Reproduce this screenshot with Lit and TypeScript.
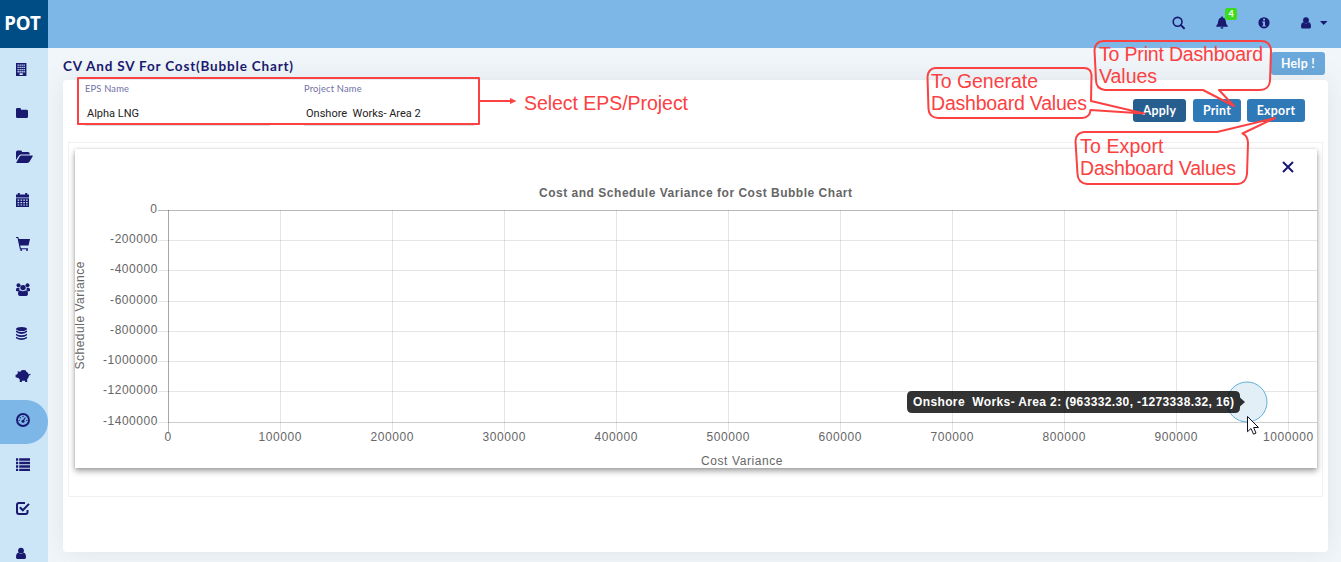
import { LitElement, html, svg, css } from 'lit';
import { customElement } from 'lit/decorators.js';
import { classMap } from 'lit/directives/class-map.js';

// Glyphs are drawn in a 20 x 20 box and take the current text colour.
const icons = {
  building: svg`<path fill-rule="evenodd" d="M2 3h10.400v13H2zM3.500 4.500v1.300h1.300V4.500zm2 0v1.300h1.300V4.500zm2 0v1.300h1.300V4.500zm2 0v1.300h1.300V4.500zM3.500 6.700V8h1.300V6.700zm2 0V8h1.300V6.700zm2 0V8h1.300V6.700zm2 0V8h1.300V6.700zM3.500 8.900v1.300h1.300V8.900zm2 0v1.300h1.300V8.900zm2 0v1.300h1.300V8.900zm2 0v1.300h1.300V8.900zM3.500 11.100v1.300h1.300v-1.300zm2 0v1.300h1.300v-1.300zm2 0v1.300h1.300v-1.300zm2 0v1.300h1.300v-1.300zM5.500 13.200v1.800h3.300v-1.800z"/>`,
  folder: svg`<path d="M2 5.200Q2 4 3.200 4h2.600Q7 4 7 5.200v.5h5.600q1.400 0 1.400 1.400v5.600q0 1.400-1.400 1.400H3.400Q2 14.100 2 12.700z"/>`,
  open: svg`<path d="M2 4.200Q2 2.500 3.500 2.500h3.200Q8 2.500 8 3.700v.2h6q1.700 0 1.700 1.700V6.400H7.200Q5.600 6.400 4.800 7.800L2 12z"/><path d="M7.200 7.500h11q1 0 .4 1l-3 5q-.8 1.400-2.200 1.400H2.900q-1 0-.4-1l3-5q.5-1.400 1.700-1.400z"/>`,
  calendar: svg`<path fill-rule="evenodd" d="M2 2.400h1.800V1h2v1.400h5.400V1h2v1.400H15v3.100H2zM2 6.300h13V15H2zM3.600 7.600v1.100h1.600V7.600zm2.900 0v1.100h1.600V7.600zm2.800 0v1.100h1.600V7.600zm2.700 0v1.100h1.600V7.600zM3.600 10.100v1.100h1.600v-1.100zm2.900 0v1.100h1.600v-1.100zm2.800 0v1.100h1.600v-1.100zm2.700 0v1.100h1.600v-1.100zM3.600 12.500v1.100h1.600v-1.100zm2.900 0v1.100h1.600v-1.100zm2.800 0v1.100h1.600v-1.100zm2.700 0v1.100h1.600v-1.100z"/>`,
  cart: svg`<path d="M2 1h2.300l.6 1.900H16l-1.500 6.600H6.200l.7 2.700h7v1.100H5.900L3.500 2.100H2z"/><circle cx="7.200" cy="14.100" r="1"/><circle cx="13" cy="14.100" r="1"/>`,
  users: svg`<circle cx="4.500" cy="5.200" r="2"/><circle cx="13.500" cy="5.200" r="2"/><path d="M2 11V9.400Q2 7.700 3.600 7.700h2q-.8 1.600.2 2.900L4.400 11.500zM16 11V9.400q0-1.700-1.600-1.700h-2q.8 1.600-.2 2.900l1.400.9z"/><circle cx="9" cy="7.600" r="2.700"/><path d="M4 13.800q0-3.300 2.600-3.300 2.400 1.400 4.800 0 2.600 0 2.600 3.300 0 2.200-2 2.200H6q-2 0-2-2.200z"/>`,
  database: svg`<ellipse cx="7.500" cy="5" rx="5.500" ry="2"/><path d="M2 6.500q5.500 3.100 11 0v1.600q-5.500 3.700-11 0zM2 9.700q5.500 3.100 11 0v1.500q-5.500 3.700-11 0zM2 12.700q5.500 3.100 11 0v1.500q-5.500 3.600-11 0z"/>`,
  pig: svg`<path d="M3.500 3.200 6 3.700Q9.500 1 13 3.900q1.400 1.100 1.700 2.700l1.500-.8.600.5-1.800 1.500q-.2 2-1.800 3.400V14h-2.100v-1.500q-1.700.4-3.200 0V14H5.800v-2.500L4.300 10l-2.700-.8V6.700L3 6.400l.9-1.300z"/><ellipse cx="9.600" cy="3.500" rx="2.600" ry="1.400"/>`,
  gauge: svg`<circle cx="9" cy="8" r="6" fill="none" stroke="currentColor" stroke-width="1.900"/><circle cx="9" cy="9.300" r="1.500"/><path d="m8.300 8.900 2.700-3.700.8.500-2.400 3.900z"/><circle cx="9" cy="4.500" r=".7"/><circle cx="6.300" cy="5.700" r=".7"/><circle cx="5.200" cy="8.400" r=".7"/><circle cx="12.800" cy="8.400" r=".7"/>`,
  list: svg`<path d="M2 2.300h2.200v2.400H2zm3.200 0H16v2.400H5.200zM2 5.800h2.200v2.400H2zm3.200 0H16v2.400H5.200zM2 9.300h2.200v2.400H2zm3.200 0H16v2.400H5.200zM2 12.800h2.200v2.300H2zm3.200 0H16v2.300H5.200z"/>`,
  check: svg`<path d="M11 3H5Q3 3 3 5v7q0 2 2 2h6.500q2 0 2-2V10M5.800 7.300l3 3 6.200-6.400" fill="none" stroke="currentColor" stroke-width="2"/>`,
  person: svg`<circle cx="7" cy="6.700" r="2.900"/><path d="M2 13.200q0-4.200 2.500-4.400Q7 11 9.500 8.800q2.500.2 2.500 4.400 0 1.900-1.700 1.900H3.700Q2 15.100 2 13.200z"/>`,
};

const menu = ['building', 'folder', 'open', 'calendar', 'cart', 'users', 'database', 'pig', 'gauge', 'list', 'check', 'person'] as const;

@customElement('variance-chart')
class VarianceChart extends LitElement {
  static styles = css`
    :host { display: block; }
    svg { display: block; width: 100%; height: 319px; overflow: visible; }
    text { font: 12px "Liberation Sans", Arial, sans-serif; fill: #666; white-space: pre; }
    .bold { font-weight: bold; }
    .tip { font-weight: bold; fill: #fff; }
    .grid { stroke: rgba(0, 0, 0, .1); }
    .zero { stroke: rgba(0, 0, 0, .27); }
  `;
  render() {
    const ys = [210, 240, 270, 301, 331, 361, 391, 422];
    const xs = Array.from({ length: 11 }, (_, i) => 168 + i * 112);
    return html`<svg viewBox="75 149 1242 319">
      <text class="bold" x="539" y="197" textLength="313">Cost and Schedule Variance for Cost Bubble Chart</text>
      ${ys.map((y, i) => {
        const label = i ? String(-200000 * i) : '0';
        const w = label.length * 7.17 - (i ? 2.900 : 0);
        return svg`<line class=${i ? 'grid' : 'zero'} x1="158" x2="1317" y1=${y + .5} y2=${y + .5} />
          <text x=${157.400 - w} y=${y + 3} textLength=${w}>${label}</text>`;
      })}
      <line class="grid" x1="168" x2="1317" y1="422.500" y2="422.500" />
      ${xs.map((x, i) => {
        const label = String(i * 100000);
        const w = label.length * 7.17;
        return svg`<line class=${i ? 'grid' : 'zero'} x1=${x + .5} x2=${x + .5} y1="210" y2="432" />
          <text x=${x - w / 2} y="441" textLength=${w}>${label}</text>`;
      })}
      <line class="grid" x1="168.500" x2="168.500" y1="210" y2="422" />
      <text x="701" y="465" textLength="81.500">Cost Variance</text>
      <text transform="translate(84 369.500) rotate(-90)" textLength="108">Schedule Variance</text>
      <circle cx="1247" cy="402" r="20" fill="#e1eef7" fill-opacity=".96" stroke="#62b0d8" />
      <path d="M912 391h323q5 0 5 5v1.500l5 4.500-5 4.500v1.500q0 5-5 5H912q-5 0-5-5v-12q0-5 5-5z" fill="rgba(0,0,0,.8)" />
      <text class="tip" x="913" y="406" textLength="321">Onshore  Works- Area 2: (963332.30, -1273338.32, 16)</text>
      <path d="M1247.500 416.500v15.200l3.500-3.200 2.500 5.700 2.500-1.100-2.400-5.600h4.900z" fill="#fff" stroke="#111122" stroke-width="1" />
    </svg>`;
  }
}

@customElement('callout-layer')
class CalloutLayer extends LitElement {
  static styles = css`
    :host { position: absolute; inset: 0; z-index: 2; pointer-events: none; }
    svg { display: block; }
    text { font: 19.500px "Liberation Sans", Arial, sans-serif; fill: #fb4142; }
    .line { fill: none; stroke: #fb4142; stroke-width: 2; stroke-linejoin: round; }
    .head { fill: #fb4142; }
  `;
  render() {
    return html`<svg width="1341" height="562" viewBox="0 0 1341 562">
      <rect class="line" x="78" y="78" width="401" height="46" />
      <path class="line" d="M478 101H511" /><path class="head" d="M510 98l6.500 3-6.500 3z" />
      <text x="524" y="110" textLength="164">Select EPS/Project</text>
      <path class="line" d="M935 68H1084Q1091 68 1091.500 75L1091 101 1144 113.500 1090.500 110Q1090 117.500 1082 118H938Q929 117.500 928.500 109L927.500 77Q928 69 935 68z" />
      <text x="931" y="88" textLength="107">To Generate</text>
      <text x="931" y="110" textLength="156">Dashboard Values</text>
      <path class="line" d="M1103 41H1261Q1270 41 1271 50L1270 81Q1269 90 1260 90H1219L1234 106 1203 90H1105Q1096 89 1096 80L1094.500 50Q1095 42 1103 41z" />
      <text x="1099" y="61" textLength="164">To Print Dashboard</text>
      <text x="1099" y="83" textLength="58">Values</text>
      <path class="line" d="M1084 132H1217L1275 118 1242.500 133.500Q1248 136 1248 143L1247 174Q1246 183 1238 184H1087Q1078 183 1077.500 174L1075.500 141Q1076 133 1084 132z" />
      <text x="1080" y="153" textLength="83.500">To Export</text>
      <text x="1080" y="175" textLength="156">Dashboard Values</text>
    </svg>`;
  }
}

@customElement('app-root')
class AppRoot extends LitElement {
  static styles = css`
    :host { display: flex; flex-direction: column; position: relative; width: 100%; height: 562px; overflow: hidden; background: #f1f6fa; color: #191970; font-family: Lato, sans-serif; }
    * { box-sizing: border-box; }
    svg { display: block; fill: currentColor; flex: none; }
    .top { display: flex; height: 48px; flex: none; background: #7cb7e8; }
    .logo { width: 48px; background: #004d85; color: #fff; font: 700 18.700px/45px "Noto Sans", sans-serif; text-align: center; padding-right: 3px; }
    .tools { flex: 1; display: flex; justify-content: flex-end; align-items: center; gap: 28px; padding: 0 13px 3px 0; }
    .search { margin-right: 1px; }
    .bell { position: relative; }
    .badge { position: absolute; left: 10px; top: -8px; width: 12px; height: 12px; border-radius: 2px; background: #3cdb1e; color: #fff; font: 700 9px/12px Lato, sans-serif; text-align: center; }
    .me { display: flex; align-items: center; gap: 7px; }
    .body { flex: 1; display: flex; min-height: 0; }
    .side { position: relative; z-index: 1; width: 48px; background: #cce6f8; overflow: hidden; }
    .item { height: 44px; padding: 12px 14px; }
    .active { background: #7cb7e8; border-radius: 0 22px 22px 0; }
    .main { flex: 1; padding: 4px 13px 10px 15px; display: flex; flex-direction: column; }
    .head { display: flex; justify-content: space-between; height: 28px; padding-right: 3px; }
    h1 { margin: 0; font: 700 13.500px/28px Lato, sans-serif; letter-spacing: .82px; }
    .btn { height: 23px; border: 0; border-radius: 3px; padding: 0; color: #fff; background: #2f79b7; font: 700 12.300px/23px Lato, sans-serif; letter-spacing: .3px; text-align: center; }
    .help { width: 54px; background: #6ba9dc; }
    .apply { width: 53px; margin-right: 1px; background: #275e90; }
    .print { width: 48px; }
    .export { width: 58px; }
    .card { flex: 1; background: #fff; border-radius: 4px; box-shadow: 0 0 28px rgba(82, 110, 110, .12); padding: 0 5px; }
    .bar { display: flex; justify-content: space-between; height: 62px; padding: 4px 18px 0 17px; }
    .fields { display: flex; gap: 34px; }
    .field { height: 42px; border-bottom: 1px solid #ddd; }
    .eps { width: 185px; }
    .proj { width: 170px; }
    .label { font-size: 9.300px; line-height: 10px; color: #7070a6; letter-spacing: .2px; }
    .value { font: 11px/14px Roboto, sans-serif; color: #222; padding: 13px 2px 0; white-space: pre; }
    .actions { display: flex; gap: 6px; padding-top: 15px; }
    .frame { height: 355px; border: 1px solid #f2f2f2; padding: 6px 5px 0 6px; }
    .chart { display: block; background: #fff; box-shadow: 0 3px 6px rgba(0, 0, 0, .38), 0 0 2px rgba(0, 0, 0, .12); }
    .plot { position: relative; }
    .close { position: absolute; right: 23px; top: 12px; }
  `;
  render() {
    return html`
      <div class="top">
        <div class="logo">POT</div>
        <div class="tools">
          <svg class="search" width="14" height="14" viewBox="0 0 14 14"><circle cx="5.600" cy="5.800" r="4.400" fill="none" stroke="currentColor" stroke-width="1.600"/><path d="m8.900 9.100 3.100 3.100" stroke="currentColor" stroke-width="2" stroke-linecap="round"/></svg>
          <div class="bell">
            <svg width="14" height="14" viewBox="0 0 14 14"><path d="M6.200.7q.8-1 1.600 0v.7q2.600.5 2.900 3.400.2 3.600 2 4.900v1H1.300v-1Q3.100 8.400 3.300 4.800 3.600 1.900 6.200 1.400zM5.500 11.200h3Q8.300 12.700 7 12.700t-1.500-1.500z"/></svg>
            <span class="badge">4</span>
          </div>
          <svg width="14" height="14" viewBox="0 0 14 14"><path fill-rule="evenodd" d="M7 1.200a5.600 5.600 0 1 1 0 11.200A5.600 5.600 0 0 1 7 1.200zM6.100 2.800v1.700H8V2.800zM5.200 5.600v1.200h.9v2.600h-.9v1.200h3.700V9.400H8V5.600z"/></svg>
          <div class="me">
            <svg width="14" height="14" viewBox="0 2.500 14 14">${icons.person}</svg>
            <svg width="8" height="4" viewBox="0 0 8 4"><path d="M0 0h7.500L3.700 4z"/></svg>
          </div>
        </div>
      </div>
      <div class="body">
        <nav class="side">
          ${menu.map(name => html`<div class=${classMap({ item: true, active: name === 'gauge' })}><svg width="20" height="20" viewBox="0 0 20 20">${icons[name]}</svg></div>`)}
        </nav>
        <main class="main">
          <div class="head"><h1>CV And SV For Cost(Bubble Chart)</h1><button class="btn help">Help !</button></div>
          <section class="card">
            <div class="bar">
              <div class="fields">
                <div class="field eps"><div class="label">EPS Name</div><div class="value">Alpha LNG</div></div>
                <div class="field proj"><div class="label">Project Name</div><div class="value">Onshore  Works- Area 2</div></div>
              </div>
              <div class="actions">
                <button class="btn apply">Apply</button><button class="btn print">Print</button><button class="btn export">Export</button>
              </div>
            </div>
            <div class="frame"><div class="plot">
              <variance-chart class="chart"></variance-chart>
              <svg class="close" width="12" height="12" viewBox="0 0 12 12"><path d="m1 1 10 10m0-10L1 11" stroke="currentColor" stroke-width="2"/></svg>
            </div></div>
          </section>
        </main>
      </div>
      <callout-layer></callout-layer>`;
  }
}
